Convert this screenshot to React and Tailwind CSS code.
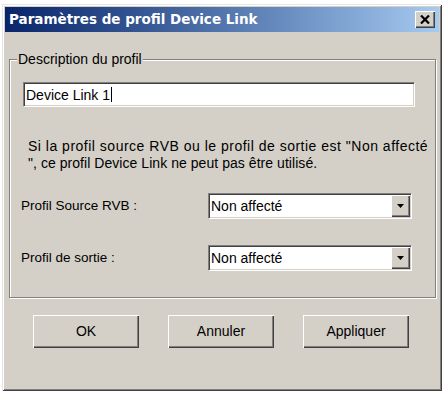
import React from "react";

const raised =
  "shadow-[inset_1px_1px_#ffffff,inset_-1px_-1px_#404040,inset_-2px_-2px_#808080]";
const sunken =
  "border border-t-[#808080] border-l-[#808080] border-b-white border-r-white shadow-[inset_1px_1px_#404040,inset_-1px_-1px_#d4d0c8]";

function Select({ value }) {
  return (
    <div className={`w-[204px] h-[26px] bg-white flex items-center ${sunken}`}>
      <span className="flex-1 pl-[2px] leading-none">{value}</span>
      <div className={`w-[19px] h-[22px] mr-[1px] bg-[#d4d0c8] flex items-center justify-center ${raised}`}>
        <svg width="9" height="5" viewBox="0 0 9 5">
          <polygon points="1,0 8,0 4.5,4" fill="#000" />
        </svg>
      </div>
    </div>
  );
}

function Btn({ children }) {
  return (
    <div className={`w-[106px] h-[33px] bg-[#d4d0c8] flex items-center justify-center ${raised}`}>
      {children}
    </div>
  );
}

export default function App() {
  return (
    <div className="w-[445px] h-[393px] bg-white overflow-hidden font-['Liberation_Sans',Arial,sans-serif] text-[14px] text-black">
      <div className="ml-[2px] mt-[4px] w-[440px] h-[387px] bg-[#d4d0c8] p-[3px] shadow-[inset_1px_1px_#e8e6e0,inset_-1px_-1px_#404040,inset_2px_2px_#ffffff,inset_-2px_-2px_#808080]">
        {/* Title bar */}
        <div className="h-[25px] bg-linear-to-r from-[#0a246a] to-[#a6caf0] flex items-center">
          <span className="pl-[4px] flex-1 text-white font-bold text-[13.5px] font-['DejaVu_Sans',sans-serif]">
            Paramètres de profil Device Link
          </span>
          <div className={`w-[20px] h-[17px] mr-[4px] bg-[#d4d0c8] flex items-center justify-center ${raised}`}>
            <svg width="10" height="9" viewBox="0 0 10 9">
              <path d="M1 0.5 L9 8.5 M9 0.5 L1 8.5" stroke="#000" strokeWidth="2.2" />
            </svg>
          </div>
        </div>

        {/* Group box */}
        <fieldset className="mt-[19px] ml-[4px] w-[427px] border border-[#808080] shadow-[inset_1px_1px_#ffffff,1px_1px_#ffffff] pb-[26px]">
          <legend className="ml-[7px] px-[1px] bg-[#d4d0c8] leading-[16px] text-[14px]">
            Description du profil
          </legend>
          <div className={`mt-[15px] ml-[13px] w-[392px] h-[25px] bg-white flex items-center ${sunken}`}>
            <span className="pl-[2px] leading-none">Device Link 1</span>
            <span className="w-px h-[15px] bg-black ml-[1px]" />
          </div>
          <p className="mt-[31px] ml-[18px] leading-[17px] text-[14px]">
            <span className="tracking-[0.5px]">Si la profil source RVB ou le profil de sortie est "Non affecté</span>
            <br />
            <span className="tracking-[0.05px]">", ce profil Device Link ne peut pas être utilisé.</span>
          </p>
          <div className="mt-[21px] ml-[11px] flex flex-col gap-[26px]">
            <div className="flex items-center h-[26px]">
              <span className="w-[187px] text-[13.5px]">Profil Source RVB :</span>
              <Select value="Non affecté" />
            </div>
            <div className="flex items-center h-[26px]">
              <span className="w-[187px] text-[13.5px]">Profil de sortie :</span>
              <Select value="Non affecté" />
            </div>
          </div>
        </fieldset>

        {/* Buttons */}
        <div className="mt-[17px] ml-[28px] flex gap-[29px]">
          <Btn>OK</Btn>
          <Btn>Annuler</Btn>
          <Btn>Appliquer</Btn>
        </div>
      </div>
    </div>
  );
}
